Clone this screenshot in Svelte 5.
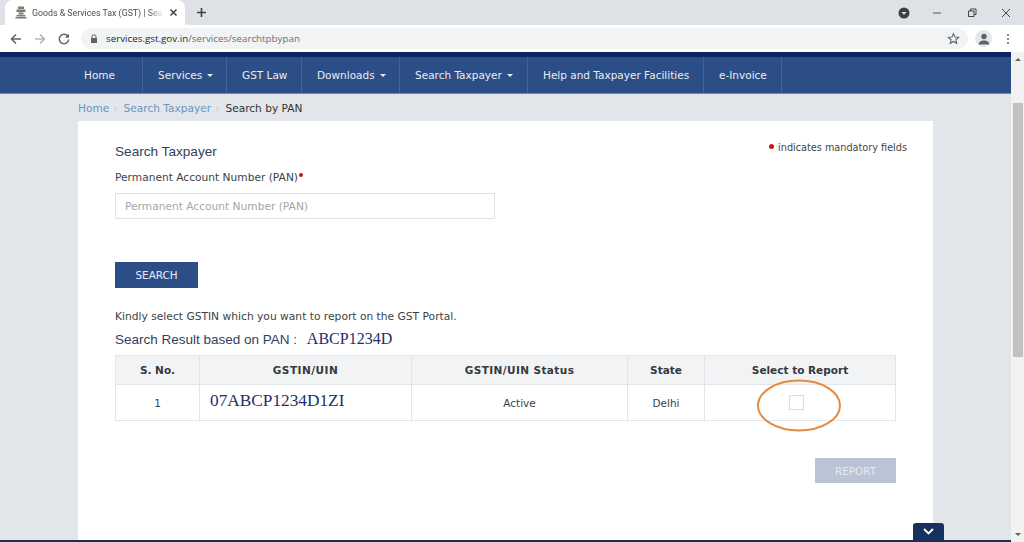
<script lang="ts">
const navItems = [
    { label: 'Home', width: 65, home: true },
    { label: 'Services', width: 84, caret: true },
    { label: 'GST Law', width: 75 },
    { label: 'Downloads', width: 98, caret: true },
    { label: 'Search Taxpayer', width: 128, caret: true },
    { label: 'Help and Taxpayer Facilities', width: 176 },
    { label: 'e-Invoice', width: 78 }
];
</script>

<div class="page">
    <div class="browser">
        <div class="tabstrip">
            <div class="tab">
                <svg class="favicon" width="12" height="13" viewBox="0 0 12 13">
                    <path d="M3 .5h6v2.500H3zM1.500 3.500h9v2.500h-9zM3.500 6.500h5v2h-5zM1.500 9h9v1.500h-9zM.5 11h11v1.500H.5z" fill="#7d7a70"/>
                </svg>
                <span class="tab-title">Goods &amp; Services Tax (GST) | Sea</span>
                <svg class="tab-close" width="9" height="9" viewBox="0 0 9 9">
                    <path d="M1.500 1.500l6 6M7.500 1.500l-6 6" stroke="#3c4043" stroke-width="1.500"/>
                </svg>
            </div>
            <svg class="newtab" width="11" height="11" viewBox="0 0 11 11">
                <path d="M5.500 1v9M1 5.500h9" stroke="#3c4043" stroke-width="1.600"/>
            </svg>
            <div class="window-controls">
                <svg class="media" width="12" height="12" viewBox="0 0 12 12">
                    <circle cx="6" cy="6" r="5.500" fill="#3c4043"/>
                    <path d="M3.500 5h5L6 8z" fill="#dee1e6"/>
                </svg>
                <svg class="win-min" width="10" height="10" viewBox="0 0 10 10">
                    <path d="M1 5h8" stroke="#555" stroke-width="1"/>
                </svg>
                <svg class="win-restore" width="10" height="10" viewBox="0 0 10 10">
                    <path d="M1.500 3h5.500v5.500H1.500zM3.500 3V1h5.500v5.500H7" fill="none" stroke="#444" stroke-width="1"/>
                </svg>
                <svg class="win-close" width="10" height="10" viewBox="0 0 10 10">
                    <path d="M1 1l8 8M9 1l-8 8" stroke="#444" stroke-width="1"/>
                </svg>
            </div>
        </div>
        <div class="toolbar">
            <svg width="12" height="12" viewBox="0 0 12 12">
                <path d="M11 6H2M6 1.500L1.500 6 6 10.500" fill="none" stroke="#5f6368" stroke-width="1.500"/>
            </svg>
            <svg class="forward" width="12" height="12" viewBox="0 0 12 12">
                <path d="M1 6h9M6 1.500L10.500 6 6 10.500" fill="none" stroke="#b4b6b9" stroke-width="1.500"/>
            </svg>
            <svg class="reload" width="12" height="12" viewBox="0 0 12 12">
                <path d="M10 3.500A4.700 4.700 0 1 0 10.700 6.500" fill="none" stroke="#5f6368" stroke-width="1.500"/>
                <path d="M11 .8v4H7z" fill="#5f6368"/>
            </svg>
            <div class="omnibox">
                <svg class="lock" width="8" height="10" viewBox="0 0 8 10">
                    <path d="M2 4V2.800a2 2 0 0 1 4 0V4" fill="none" stroke="#5f6368" stroke-width="1"/>
                    <rect x="1" y="4" width="6" height="5" fill="#5f6368"/>
                </svg>
                <span class="url"><b>services.gst.gov.in</b>/services/searchtpbypan</span>
                <svg class="star" width="13" height="13" viewBox="0 0 24 24">
                    <path d="M12 3l2.700 6.200 6.800.6-5.100 4.500 1.500 6.600L12 17.400l-5.900 3.500 1.500-6.600L2.500 9.800l6.800-.6z" fill="none" stroke="#5f6368" stroke-width="2"/>
                </svg>
            </div>
            <div class="avatar">
                <svg width="12" height="12" viewBox="0 0 12 12">
                    <circle cx="6" cy="3.500" r="2.700" fill="#5f6368"/>
                    <path d="M.8 11.500c0-3 2.500-4 5.200-4s5.200 1 5.200 4z" fill="#5f6368"/>
                </svg>
            </div>
            <div class="kebab"><i></i><i></i><i></i></div>
        </div>
    </div>

    <div class="viewport">
        <div class="site">
            <nav class="navbar">
                <ul>
                    {#each navItems as item}
                        <li class:home={item.home} style="width:{item.width}px">
                            {item.label}
                            {#if item.caret}<span class="caret"></span>{/if}
                        </li>
                    {/each}
                </ul>
            </nav>
            <div class="breadcrumb">
                <span class="crumb">Home</span><span class="sep">›</span>
                <span class="crumb">Search Taxpayer</span><span class="sep">›</span>
                <span class="current">Search by PAN</span>
            </div>
            <main class="card">
                <div class="form-head">
                    <h1>Search Taxpayer</h1>
                    <p class="mandatory"><span class="dot"></span>indicates mandatory fields</p>
                </div>
                <label class="pan-label" for="pan">Permanent Account Number (PAN)<span class="dot small"></span></label>
                <input id="pan" type="text" placeholder="Permanent Account Number (PAN)" />
                <button class="search-btn">SEARCH</button>
                <p class="kindly">Kindly select GSTIN which you want to report on the GST Portal.</p>
                <h2>Search Result based on PAN : <span class="pan-value">ABCP1234D</span></h2>
                <table>
                    <thead>
                        <tr>
                            <th class="c1">S. No.</th>
                            <th class="c2">GSTIN/UIN</th>
                            <th class="c3">GSTIN/UIN Status</th>
                            <th class="c4">State</th>
                            <th>Select to Report</th>
                        </tr>
                    </thead>
                    <tbody>
                        <tr>
                            <td>1</td>
                            <td class="gstin">07ABCP1234D1ZI</td>
                            <td>Active</td>
                            <td>Delhi</td>
                            <td class="select-cell">
                                <span class="checkbox"></span>
                                <svg class="circle" width="86" height="53" viewBox="0 0 86 53">
                                    <ellipse cx="43" cy="26.500" rx="41" ry="25" fill="none" stroke="#e58a3e" stroke-width="2"/>
                                </svg>
                            </td>
                        </tr>
                    </tbody>
                </table>
                <div class="actions">
                    <button class="report-btn">REPORT</button>
                </div>
            </main>
            <div class="footer-bar">
                <div class="toggle">
                    <svg width="11" height="7" viewBox="0 0 11 7">
                        <path d="M1 1l4.500 4.500L10 1" fill="none" stroke="#fff" stroke-width="1.800"/>
                    </svg>
                </div>
            </div>
        </div>
        <div class="scrollbar">
            <span class="arrow up"></span>
            <div class="thumb"></div>
            <span class="arrow down"></span>
        </div>
    </div>
</div>

<style>
    :global(body) {
        margin: 0;
    }

    .page {
        width: 1024px;
        height: 542px;
        display: flex;
        flex-direction: column;
        overflow: hidden;
        font-family: "DejaVu Sans", Verdana, sans-serif;
    }

    .browser {
        flex: none;
        font-family: "Open Sans", "Noto Sans", sans-serif;
    }

    .tabstrip {
        height: 25px;
        background: #dee1e6;
        display: flex;
        align-items: flex-end;
        padding-left: 5px;
    }

    .tab {
        width: 180px;
        height: 25px;
        box-sizing: border-box;
        background: #fff;
        border-radius: 8px 8px 0 0;
        display: flex;
        align-items: center;
        padding: 0 7px 0 10px;
        color: #4a4d51;
    }

    .favicon {
        flex: none;
        margin-right: 5px;
    }

    .tab-title {
        flex: 1;
        font-family: Roboto, sans-serif;
        font-size: 8.800px;
        white-space: nowrap;
        -webkit-mask-image: linear-gradient(to right, #000 88%, transparent);
        mask-image: linear-gradient(to right, #000 88%, transparent);
    }

    .tab-close {
        flex: none;
        margin-left: 5px;
    }

    .newtab {
        align-self: center;
        margin-left: 11px;
    }

    .window-controls {
        margin-left: auto;
        align-self: center;
        display: flex;
        align-items: center;
    }

    .media {
        margin-right: 22px;
    }

    .win-min {
        margin-right: 25px;
    }

    .win-restore {
        margin-right: 24px;
    }

    .win-close {
        margin-right: 13px;
    }

    .toolbar {
        height: 27px;
        background: #fff;
        display: flex;
        align-items: center;
        padding-left: 10px;
    }

    .forward {
        margin-left: 12px;
    }

    .reload {
        margin-left: 12px;
    }

    .omnibox {
        margin-left: 11px;
        width: 887px;
        height: 21px;
        box-sizing: border-box;
        background: #f1f3f4;
        border-radius: 11px;
        display: flex;
        align-items: center;
        padding: 0 8px 0 9px;
    }

    .lock {
        margin-right: 8px;
    }

    .url {
        flex: 1;
        font-size: 9.800px;
        color: #6b6f73;
    }

    .url b {
        font-weight: 400;
        color: #26282b;
    }

    .avatar {
        margin-left: 7px;
        width: 17px;
        height: 17px;
        border-radius: 50%;
        background: #e3e6ea;
        display: flex;
        align-items: center;
        justify-content: center;
    }

    .kebab {
        margin-left: 15px;
        display: flex;
        flex-direction: column;
        gap: 2px;
    }

    .kebab i {
        width: 2px;
        height: 2px;
        background: #5f6368;
        border-radius: 50%;
    }

    .viewport {
        flex: 1;
        min-height: 0;
        display: flex;
    }

    .site {
        flex: 1;
        min-width: 0;
        background: #e2e5e9;
        display: flex;
        flex-direction: column;
    }

    .navbar {
        flex: none;
        background: #2c4e86;
        border-top: 5px solid #0d2462;
        border-bottom: 1px solid #6f88b0;
        height: 36px;
        padding-left: 78px;
    }

    .navbar ul {
        margin: 0;
        padding: 0;
        list-style: none;
        display: flex;
        height: 100%;
    }

    .navbar li {
        box-sizing: border-box;
        border-right: 1px solid #40639a;
        display: flex;
        align-items: center;
        gap: 5px;
        padding-left: 15px;
        font-size: 10.500px;
        white-space: nowrap;
        color: #e8edf4;
    }

    .navbar li.home {
        padding-left: 6px;
    }

    .caret {
        width: 0;
        height: 0;
        border-top: 3px solid #e8edf4;
        border-left: 3px solid transparent;
        border-right: 3px solid transparent;
    }

    .breadcrumb {
        flex: none;
        height: 27px;
        padding-left: 78px;
        display: flex;
        align-items: center;
        font-size: 10.600px;
        color: #333;
    }

    .crumb {
        color: #6c95c1;
    }

    .sep {
        color: #c8ccd2;
        margin: 0 6px 0 4px;
    }

    .card {
        flex: 1;
        margin: 0 78px;
        padding: 0 37px;
        background: #fff;
        min-height: 0;
    }

    .form-head {
        display: flex;
        justify-content: space-between;
        align-items: flex-start;
        margin-right: -11px;
        padding-top: 23px;
    }

    h1 {
        margin: 0;
        font: 400 13.600px/16px "Liberation Sans", Arial, sans-serif;
        color: #33415a;
    }

    .mandatory {
        margin: -4px 0 0;
        font-size: 9.700px;
        line-height: 16px;
        color: #444;
        display: flex;
        align-items: center;
    }

    .dot {
        width: 5px;
        height: 5px;
        background: #d0121b;
        border-radius: 50%;
        margin-right: 4px;
        margin-top: -3px;
    }

    .dot.small {
        display: inline-block;
        width: 4px;
        height: 4px;
        margin: 0 0 4px 1px;
    }

    .pan-label {
        display: block;
        margin-top: 11px;
        font-size: 10.650px;
        line-height: 14px;
        color: #3c3f44;
    }

    input {
        display: block;
        margin-top: 8px;
        width: 380px;
        height: 26px;
        box-sizing: border-box;
        border: 1px solid #dfe1e4;
        padding: 0 9px;
        font: 10.650px "DejaVu Sans", Verdana, sans-serif;
        outline: none;
    }

    input::placeholder {
        color: #a3a6a9;
    }

    button {
        border: 0;
        padding: 0;
        font-family: "DejaVu Sans", Verdana, sans-serif;
        font-size: 10.400px;
    }

    .search-btn {
        display: block;
        margin-top: 43px;
        width: 83px;
        height: 26px;
        background: #2c4e86;
        color: #e8edf4;
    }

    .kindly {
        margin: 22px 0 0;
        font-size: 10.700px;
        line-height: 14px;
        color: #3c3f44;
    }

    h2 {
        margin: 7px 0 0;
        font: 400 13.500px/18px "Liberation Sans", Arial, sans-serif;
        color: #33415a;
    }

    .pan-value {
        margin-left: 6px;
        font: 16px/16px "Liberation Serif", serif;
        color: #1f2f6b;
    }

    table {
        margin-top: 6px;
        width: 781px;
        border-collapse: collapse;
        table-layout: fixed;
        font-size: 10.500px;
        color: #3c3f44;
    }

    th, td {
        border: 1px solid #e3e5e8;
        text-align: center;
        padding: 0;
        box-sizing: border-box;
    }

    th {
        height: 29px;
        background: #f2f3f5;
        font-weight: 700;
        font-size: 10.500px;
        color: #35383c;
    }

    td {
        height: 36px;
    }

    .c1 { width: 84px; }
    .c2 { width: 212px; letter-spacing: .5px; }
    .c3 { width: 216px; letter-spacing: .4px; }
    .c4 { width: 77px; }

    .gstin {
        text-align: left;
        padding: 0 0 4px 10px;
        font: 17.300px/20px "Liberation Serif", serif;
        color: #1f2f6b;
    }

    .select-cell {
        position: relative;
    }

    .checkbox {
        display: block;
        margin: 0 auto;
        width: 15px;
        height: 15px;
        box-sizing: border-box;
        border: 1.500px solid #dcdde0;
        transform: translateX(-4px);
    }

    .circle {
        position: absolute;
        left: 51px;
        top: -6px;
    }

    .actions {
        margin-top: 37px;
        width: 781px;
        display: flex;
        justify-content: flex-end;
    }

    .report-btn {
        width: 81px;
        height: 25px;
        background: #bac4d4;
        color: #e6eaf0;
    }

    .footer-bar {
        flex: none;
        height: 2px;
        background: #16305f;
        position: relative;
    }

    .toggle {
        position: absolute;
        left: 913px;
        bottom: 2px;
        width: 31px;
        height: 17px;
        background: #16305f;
        border-radius: 3px 3px 0 0;
        display: flex;
        align-items: center;
        justify-content: center;
    }

    .scrollbar {
        flex: none;
        width: 13px;
        background: #f1f1f1;
        display: flex;
        flex-direction: column;
        align-items: center;
    }

    .thumb {
        margin-top: 42px;
        width: 10px;
        height: 254px;
        background: #c1c1c1;
    }

    .arrow {
        width: 0;
        height: 0;
        border-left: 3px solid transparent;
        border-right: 3px solid transparent;
    }

    .arrow.up {
        margin-top: 6px;
        border-bottom: 3px solid #606060;
    }

    .arrow.down {
        margin-top: auto;
        margin-bottom: 6px;
        border-top: 3px solid #606060;
    }
</style>
